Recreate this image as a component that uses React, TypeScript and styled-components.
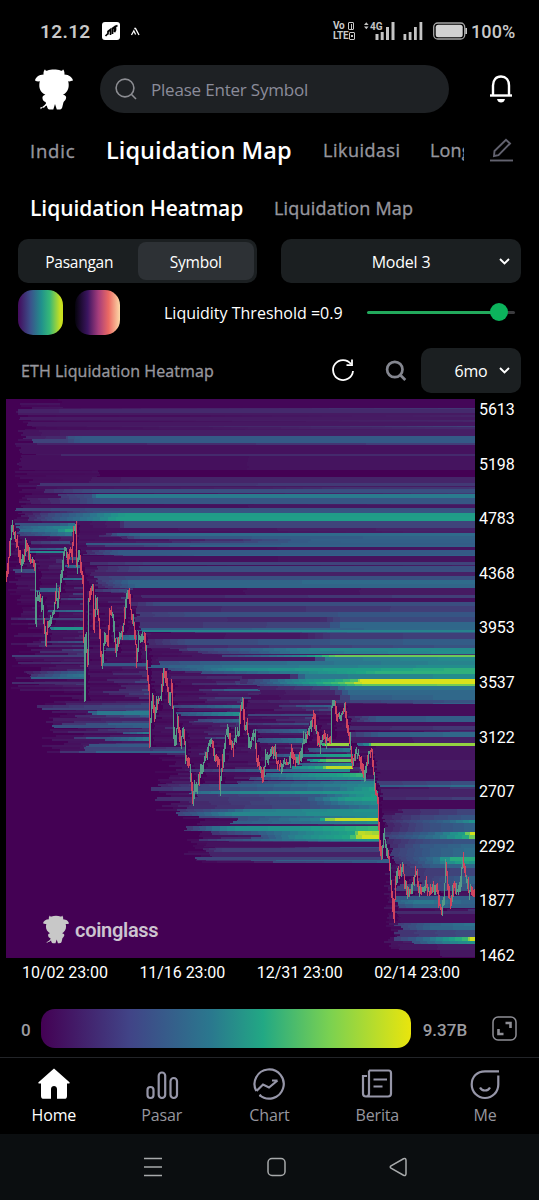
import React from "react";
import styled, { createGlobalStyle, css } from "styled-components";

const GlobalStyle = createGlobalStyle`
  html, body { margin: 0; padding: 0; background: #000; }
  * { box-sizing: border-box; }
`;

const sans = `"Open Sans", "Noto Sans", sans-serif`;
const din = `Roboto, "Liberation Sans", sans-serif`;

/* ---------- heatmap data ---------- */

const VIRIDIS = [
  [68, 1, 84], [70, 32, 102], [64, 66, 122], [52, 90, 134], [44, 118, 142], [34, 144, 140],
  [31, 163, 134], [62, 188, 113], [122, 205, 81], [184, 218, 42], [226, 228, 24],
];

function heat(v: number): string {
  const t = Math.max(0, Math.min(0.999, v)) * 10;
  const i = Math.floor(t);
  const f = t - i;
  const c = VIRIDIS[i].map((a, k) => Math.round(a + (VIRIDIS[i + 1][k] - a) * f));
  return `rgb(${c.join(",")})`;
}

function seeded(seed: number) {
  let s = seed;
  return () => {
    s = (s * 1664525 + 1013904223) % 4294967296;
    return s / 4294967296;
  };
}

const LEFT = 6;
const RIGHT = 475;
const TOP = 399;
const BOTTOM = 958;

const PRICE: number[][] = [
  [6, 582], [8, 565], [10, 550], [12, 526], [14, 534], [17, 542], [20, 555], [22, 565], [24, 558], [26, 541],
  [28, 547], [31, 563], [34, 560], [35, 568], [36, 622], [37, 597], [40, 596], [43, 608], [46, 644], [48, 625],
  [51, 620], [54, 612], [56, 592], [58, 606], [60, 590], [62, 570], [64, 553], [66, 549], [68, 562], [70, 550],
  [72, 556], [74, 530], [76, 525], [77, 565], [79, 552], [81, 567], [83, 578], [84, 640], [85, 700], [86, 640],
  [88, 662], [89, 600], [91, 594], [93, 586], [94, 630], [96, 598], [99, 620], [101, 655], [102, 664], [105, 635],
  [108, 642], [110, 612], [113, 615], [116, 652], [118, 640], [121, 635], [124, 625], [126, 600], [128, 590],
  [131, 610], [134, 622], [136, 645], [137, 662], [139, 640], [142, 637], [145, 635], [147, 665], [149, 690],
  [150, 745], [151, 720], [153, 695], [155, 718], [158, 700], [161, 698], [164, 670], [167, 685], [170, 702],
  [172, 683], [174, 730], [175, 742], [178, 722], [181, 740], [184, 730], [186, 758], [190, 765], [192, 790],
  [193, 803], [195, 785], [197, 788], [201, 772], [205, 760], [209, 745], [212, 742], [215, 757], [219, 762],
  [220, 789], [222, 770], [226, 735], [228, 727], [230, 740], [233, 748], [236, 737], [239, 735], [241, 710],
  [243, 698], [245, 730], [247, 722], [249, 748], [253, 735], [255, 733], [257, 760], [260, 768], [263, 782],
  [266, 758], [270, 756], [274, 748], [277, 762], [281, 766], [285, 763], [290, 762], [292, 750], [296, 763],
  [300, 758], [303, 744], [307, 735], [310, 728], [314, 714], [316, 728], [320, 746], [324, 735], [328, 740],
  [331, 740], [332, 706], [335, 702], [337, 716], [340, 718], [343, 712], [345, 705], [348, 728], [350, 742],
  [353, 765], [356, 752], [360, 757], [364, 778], [367, 765], [369, 752], [372, 752], [374, 775], [376, 792],
  [378, 800], [380, 845], [382, 858], [384, 835], [386, 845], [389, 858], [391, 880], [393, 908], [394, 919],
  [396, 880], [398, 872], [401, 876], [403, 866], [405, 882], [408, 896], [411, 893], [414, 878], [417, 873],
  [419, 892], [422, 890], [426, 886], [430, 893], [434, 888], [438, 892], [440, 905], [442, 911], [444, 900],
  [446, 866], [448, 885], [451, 906], [454, 885], [457, 890], [460, 886], [463, 858], [466, 876], [469, 892],
  [472, 890], [475, 896],
];

function priceAt(x: number): number {
  for (let i = 1; i < PRICE.length; i++) {
    if (x <= PRICE[i][0]) {
      const [x0, y0] = PRICE[i - 1];
      const [x1, y1] = PRICE[i];
      return y0 + ((y1 - y0) * (x - x0)) / (x1 - x0);
    }
  }
  return PRICE[PRICE.length - 1][1];
}

/* y, height, then x/value pairs; the value is interpolated between pairs */
const BANDS: number[][] = [
  [399, 9, 60, 0.02, 475, 0.02],
  [409, 4, 16, 0.1, 100, 0.13, 475, 0.13], [413, 2, 16, 0.08, 475, 0.08], [417, 3, 22, 0.08, 475, 0.09],
  [422, 4, 27, 0.08, 475, 0.07], [430, 6, 20, 0.05, 60, 0.09, 475, 0.1],
  [436, 3, 24, 0.1, 66, 0.14, 68, 0.26, 82, 0.3, 475, 0.3], [439, 4, 33, 0.2, 68, 0.22, 80, 0.3, 475, 0.3],
  [443, 2, 36, 0.1, 475, 0.2], [445, 9, 20, 0.05, 475, 0.06], [454, 2, 64, 0.13, 475, 0.13],
  [456, 14, 20, 0.04, 475, 0.07], [470, 7, 100, 0, 475, 0], [477, 6, 90, 0.07, 150, 0.11, 475, 0.12],
  [483, 3, 40, 0.15, 475, 0.18], [489, 4, 44, 0.13, 92, 0.24, 475, 0.26],
  [494, 4, 60, 0.17, 92, 0.25, 96, 0.42, 475, 0.42], [498, 6, 30, 0.08, 80, 0.2, 100, 0.28, 475, 0.29],
  [505, 3, 20, 0.04, 475, 0.08], [508, 3, 17, 0.2, 120, 0.26, 475, 0.28], [511, 3, 20, 0.05, 60, 0.13, 100, 0.27, 475, 0.28],
  [513, 4, 24, 0.07, 55, 0.25, 90, 0.38, 125, 0.56, 475, 0.57], [517, 4, 30, 0.12, 60, 0.3, 100, 0.44, 116, 0.57, 475, 0.58],
  [521, 7, 78, 0.04, 120, 0.1, 124, 0.2, 475, 0.22], [528, 3, 78, 0.04, 475, 0.12],
  [533, 3, 105, 0.1, 117, 0.3, 140, 0.35, 475, 0.37], [536, 3, 120, 0.1, 140, 0.28, 475, 0.34],
  [543, 2, 87, 0.28, 475, 0.32], [547, 3, 80, 0.04, 475, 0.07], [550, 5, 85, 0.12, 118, 0.3, 475, 0.3],
  [556, 6, 80, 0.04, 475, 0.07], [562, 3, 88, 0.14, 160, 0.22, 475, 0.2], [566, 6, 95, 0.12, 150, 0.24, 475, 0.26],
  [572, 4, 90, 0.1, 475, 0.1], [576, 4, 95, 0.18, 140, 0.25, 475, 0.27], [580, 4, 96, 0.15, 128, 0.33, 475, 0.37],
  [584, 4, 96, 0.1, 135, 0.33, 475, 0.35], [588, 7, 130, 0.03, 475, 0.09], [595, 3, 140, 0.12, 475, 0.2],
  [598, 4, 130, 0.04, 475, 0.06], [602, 4, 133, 0.12, 160, 0.25, 475, 0.25], [606, 6, 135, 0.12, 475, 0.2],
  [612, 5, 137, 0.17, 200, 0.25, 475, 0.29], [617, 5, 135, 0.15, 320, 0.12, 340, 0.22, 475, 0.24],
  [622, 6, 140, 0.15, 330, 0.22, 340, 0.34, 475, 0.35], [628, 3, 140, 0.3, 475, 0.36], [630, 2, 144, 0.44, 475, 0.46],
  [633, 6, 148, 0.04, 300, 0.08, 330, 0.17, 475, 0.2], [639, 6, 148, 0.12, 185, 0.23, 475, 0.32],
  [645, 3, 148, 0.1, 475, 0.28], [648, 3, 190, 0.2, 240, 0.3, 320, 0.45, 475, 0.49], [651, 3, 200, 0.15, 300, 0.4, 475, 0.5],
  [655, 2, 220, 0.2, 300, 0.45, 322, 0.65, 335, 0.77, 475, 0.79], [657, 4, 155, 0.06, 315, 0.08, 325, 0.4, 475, 0.49],
  [661, 4, 160, 0.25, 240, 0.35, 475, 0.46], [665, 3, 150, 0.3, 240, 0.4, 475, 0.5],
  [668, 3, 170, 0.25, 240, 0.48, 350, 0.58, 475, 0.66], [671, 3, 200, 0.25, 280, 0.4, 375, 0.64, 475, 0.66],
  [674, 5, 165, 0.05, 290, 0.08, 305, 0.4, 475, 0.5],
  [679, 3, 240, 0.12, 285, 0.4, 335, 0.6, 358, 0.75, 360, 0.98, 475, 0.98],
  [682, 2, 240, 0.12, 280, 0.38, 345, 0.76, 362, 0.98, 475, 0.98], [684, 2, 260, 0.2, 310, 0.42, 362, 0.75, 475, 0.8],
  [686, 4, 260, 0.1, 330, 0.2, 345, 0.4, 475, 0.4], [690, 5, 260, 0.06, 335, 0.13, 348, 0.34, 475, 0.36],
  [695, 5, 250, 0.03, 340, 0.1, 350, 0.3, 475, 0.36], [700, 3, 250, 0.08, 350, 0.2, 475, 0.28],
  [704, 12, 346, 0.04, 475, 0.04], [716, 6, 349, 0.1, 376, 0.28, 475, 0.32], [722, 4, 349, 0.04, 475, 0.06],
  [726, 4, 350, 0.12, 475, 0.18], [732, 5, 350, 0.15, 378, 0.3, 475, 0.36], [737, 6, 350, 0.07, 475, 0.12],
  [743, 3, 355, 0.3, 369, 0.5, 371, 0.84, 475, 0.84], [746, 14, 374, 0.06, 475, 0.07], [760, 10, 376, 0.09, 475, 0.09],
  [770, 11, 378, 0.06, 475, 0.07], [781, 4, 379, 0.18, 475, 0.26], [785, 2, 379, 0.3, 475, 0.38], [789, 8, 380, 0.1, 475, 0.12],
  [797, 3, 380, 0.12, 475, 0.2], [800, 9, 380, 0.02, 475, 0.03], [809, 6, 400, 0.12, 475, 0.22], [815, 5, 382, 0.1, 420, 0.2, 475, 0.3],
  [820, 3, 384, 0.12, 450, 0.35, 475, 0.52], [823, 9, 386, 0.1, 430, 0.25, 475, 0.33],
  [832, 3, 386, 0.15, 435, 0.35, 465, 0.6, 470, 0.95, 475, 0.98], [835, 4, 386, 0.2, 440, 0.4, 469, 0.65, 475, 0.9],
  [839, 5, 388, 0.12, 430, 0.25, 475, 0.28], [844, 4, 390, 0.12, 420, 0.28, 475, 0.36], [848, 9, 392, 0.18, 430, 0.3, 475, 0.38],
  [857, 4, 395, 0.15, 440, 0.4, 450, 0.62, 475, 0.64], [861, 3, 395, 0.12, 440, 0.4, 462, 0.6, 475, 0.5],
  [864, 4, 398, 0.1, 430, 0.3, 475, 0.36], [868, 8, 400, 0.15, 475, 0.22], [876, 8, 420, 0.15, 475, 0.35],
  [884, 7, 397, 0.18, 475, 0.28], [896, 4, 397, 0.28, 475, 0.32], [900, 4, 396, 0.32, 420, 0.42, 475, 0.32], [904, 4, 397, 0.25, 420, 0.35, 475, 0.3],
  [911, 3, 396, 0.12, 475, 0.14], [914, 9, 400, 0.04, 475, 0.06], [923, 3, 396, 0.18, 430, 0.32, 475, 0.4],
  [926, 4, 402, 0.2, 430, 0.33, 475, 0.37], [930, 7, 397, 0.15, 475, 0.25],
  [937, 4, 396, 0.18, 430, 0.38, 455, 0.6, 468, 0.7, 470, 0.96, 475, 0.96], [941, 3, 412, 0.25, 450, 0.45, 475, 0.52],
  [944, 6, 400, 0.06, 475, 0.1], [950, 7, 440, 0.07, 475, 0.07],
  // levels swept by the first decline
  [523, 3, 17, 0.26, 60, 0.3, 75, 0.4], [526, 3, 17, 0.3, 75, 0.5], [529, 3, 22, 0.35, 58, 0.42, 65, 0.6, 74, 0.65], [532, 4, 20, 0.2, 72, 0.42],
  [541, 3, 28, 0.15, 70, 0.25], [548, 2, 28, 0.25, 64, 0.35], [551, 2, 30, 0.35, 36, 0.46, 65, 0.48],
  [557, 3, 67, 0.2, 79, 0.3], [565, 3, 65, 0.3, 81, 0.38], [569, 4, 14, 0.2, 35, 0.25], [578, 2, 63, 0.35, 84, 0.38],
  [588, 4, 37, 0.3, 59, 0.35], [589, 3, 97, 0.15, 127, 0.25], [598, 2, 60, 0.15, 83, 0.25], [610, 2, 45, 0.3, 84, 0.38],
  [618, 2, 12, 0.1, 40, 0.2, 84, 0.2], [627, 3, 50, 0.35, 54, 0.5, 84, 0.52], [641, 2, 40, 0.15, 84, 0.27], [648, 3, 104, 0.2, 115, 0.25],
  [635, 5, 118, 0.3, 137, 0.4], [655, 2, 14, 0.18, 84, 0.2], [662, 2, 20, 0.1, 84, 0.15], [663, 3, 102, 0.3, 147, 0.3],
  [671, 3, 24, 0.08, 68, 0.28, 85, 0.32], [674, 3, 29, 0.15, 67, 0.35, 85, 0.4], [677, 2, 32, 0.32, 85, 0.36], [682, 2, 10, 0.13, 85, 0.15],
  [705, 3, 40, 0.12, 100, 0.2, 149, 0.24], [708, 2, 43, 0.18, 149, 0.2], [711, 4, 90, 0.25, 97, 0.4, 149, 0.43], [718, 3, 55, 0.08, 149, 0.12],
  [725, 3, 52, 0.25, 100, 0.26, 149, 0.32], [729, 2, 110, 0.15, 149, 0.18], [732, 2, 124, 0.25, 150, 0.44], [737, 4, 103, 0.25, 150, 0.42],
  [744, 3, 88, 0.26, 150, 0.3], [747, 4, 85, 0.2, 150, 0.22],
  [676, 3, 170, 0.1, 242, 0.14], [705, 3, 172, 0.2, 240, 0.4], [712, 4, 178, 0.25, 240, 0.5], [719, 3, 195, 0.2, 240, 0.35],
  [714, 2, 248, 0.2, 313, 0.25], [723, 2, 250, 0.15, 309, 0.25], [729, 4, 255, 0.2, 307, 0.35], [738, 5, 258, 0.25, 303, 0.4],
  [743, 3, 320, 0.5, 325, 0.84, 349, 0.86], [748, 4, 310, 0.25, 350, 0.4], [754, 3, 275, 0.25, 330, 0.55, 353, 0.6],
  [759, 3, 310, 0.4, 326, 0.75, 352, 0.78], [763, 3, 300, 0.3, 353, 0.5], [766, 3, 290, 0.45, 323, 0.65, 326, 0.9, 353, 0.92],
  [769, 3, 190, 0.15, 280, 0.35, 350, 0.5], [773, 4, 265, 0.35, 330, 0.55, 363, 0.68], [777, 3, 250, 0.2, 300, 0.4, 364, 0.5],
  [781, 3, 240, 0.2, 374, 0.45], [784, 3, 160, 0.1, 240, 0.3, 375, 0.48], [787, 4, 150, 0.15, 240, 0.25, 340, 0.38, 376, 0.6],
  [791, 3, 190, 0.35, 240, 0.45, 378, 0.55], [794, 3, 200, 0.15, 320, 0.3, 378, 0.6], [797, 4, 155, 0.12, 300, 0.22, 345, 0.55, 378, 0.6],
  [801, 4, 190, 0.12, 310, 0.25, 345, 0.42, 379, 0.5], [805, 4, 190, 0.12, 300, 0.22, 379, 0.42],
  [809, 3, 180, 0.15, 228, 0.3, 250, 0.42, 379, 0.52], [812, 4, 178, 0.2, 232, 0.45, 379, 0.5],
  [816, 2, 200, 0.2, 330, 0.4, 379, 0.5], [818, 5, 240, 0.25, 320, 0.45, 325, 0.75, 335, 0.93, 379, 0.94],
  [821, 3, 230, 0.3, 330, 0.4, 379, 0.5], [826, 5, 186, 0.15, 212, 0.35, 235, 0.48, 300, 0.52, 345, 0.62, 379, 0.68],
  [831, 4, 210, 0.15, 290, 0.4, 355, 0.6, 358, 0.92, 379, 0.85], [835, 4, 260, 0.25, 295, 0.45, 350, 0.62, 362, 0.96, 379, 0.96],
  [839, 2, 200, 0.15, 270, 0.35, 379, 0.55], [842, 5, 205, 0.05, 380, 0.06], [848, 4, 205, 0.1, 222, 0.2, 380, 0.18],
  [852, 5, 210, 0.1, 380, 0.12], [857, 3, 196, 0.2, 382, 0.22],
];

interface Cell { x: number; y: number; w: number; h: number; c: string }

function buildCells(): Cell[] {
  const rnd = seeded(71);
  const cells: Cell[] = [];
  const push = (x: number, y: number, x2: number, h: number, v: number) => {
    if (x2 > x) cells.push({ x, y, w: x2 - x, h, c: heat(v) });
  };
  // faint background levels, reset wherever the price sweeps through them
  for (let y = 403; y < 948; y += 2) {
    let start = 0;
    if (y < 520) start = 14 + rnd() * 24;
    else if (y < 600) start = 8 + rnd() * 14;
    else if (y < 690) start = 10 + rnd() * 34;
    else if (y < 752) start = 42 + rnd() * 42;
    else if (y < 810) start = 148 + rnd() * 34;
    else if (y < 862) start = 182 + rnd() * 24;
    else start = 383 + rnd() * 12;
    let x = Math.round(start);
    while (x < RIGHT) {
      let end = RIGHT;
      for (let p = x + 2; p < RIGHT; p++) {
        if ((priceAt(p) - y) * (priceAt(p - 1) - y) <= 0) { end = p; break; }
      }
      let v = 0.02 + rnd() * 0.05;
      const gain = y > 520 ? rnd() * 0.38 : rnd() * 0.05;
      let cur = x;
      while (cur < end) {
        const next = Math.min(end, cur + 8 + Math.round(rnd() * 30));
        push(cur, y, next, 2, v);
        v = Math.min(v + rnd() * gain * 0.35, 0.32);
        cur = next;
      }
      x = end + 2 + Math.round(rnd() * 4);
    }
  }
  for (const band of BANDS) {
    const [y, h, ...pts] = band;
    for (let row = 0; row < h; row += 2) {
      const rh = Math.min(2, h - row);
      const shift = Math.round((rnd() - 0.5) * 6);
      const last = pts[pts.length - 2];
      for (let i = 0; i + 3 < pts.length; i += 2) {
        const a = i === 0 ? pts[0] + shift : pts[i];
        const b = pts[i + 2];
        const va = pts[i + 1];
        const vb = pts[i + 3];
        const steps = Math.max(1, Math.min(Math.round((b - a) / 7), Math.ceil(Math.abs(vb - va) / 0.025)));
        for (let s = 0; s < steps; s++) {
          const x1 = Math.round(a + ((b - a) * s) / steps);
          const x2 = Math.round(a + ((b - a) * (s + 1)) / steps);
          push(Math.max(LEFT, x1), y + row, Math.min(last, x2), rh, va + ((vb - va) * (s + 0.5)) / steps);
        }
      }
    }
  }
  return cells;
}

interface Candle { x: number; top: number; h: number; up: boolean }

function buildCandles(): Candle[] {
  const rnd = seeded(9);
  const out: Candle[] = [];
  let prev = priceAt(6);
  for (let x = 6; x < RIGHT; x += 1) {
    const now = priceAt(x + 1);
    const up = rnd() < 0.25 ? now >= prev : now < prev;
    const pad = 2 + rnd() * 9;
    const share = rnd();
    const top = Math.min(prev, now) - pad * share;
    const bottom = Math.max(prev, now) + pad * (1 - share);
    out.push({ x, top, h: Math.max(3, bottom - top), up });
    prev = now;
  }
  return out;
}

const CELLS = buildCells();
const CANDLES = buildCandles();

/* ---------- layout ---------- */

const Screen = styled.main`
  width: 539px;
  height: 1200px;
  display: flex;
  flex-direction: column;
  overflow: hidden;
  background: #000;
  color: #fff;
  font-family: ${sans};
  white-space: nowrap;
`;

const StatusBar = styled.header`
  height: 62px;
  display: flex;
  align-items: center;
  padding: 0 23px 0 40px;
  font: 500 19px ${din};
  color: #c9c9c9;
`;

const Clock = styled.span`
  width: 62px;
  letter-spacing: 0.35px;
  font-weight: 600;
`;

const StatusIcons = styled.div`
  margin-left: auto;
  display: flex;
  align-items: center;
`;

const Lte = styled.div`
  width: 30px;
  display: flex;
  flex-direction: column;
  font: 700 10px/10px ${din};
  letter-spacing: -0.3px;
`;

const LteLine = styled.div<{ $gap: number }>`
  height: 10px;
  display: flex;
  align-items: center;
  gap: ${(p) => p.$gap}px;
`;

const SimSlot = styled.i<{ $filled?: boolean }>`
  width: 6px;
  height: 8px;
  border: 1.5px solid #c9c9c9;
  border-radius: 1px;
  background: linear-gradient(#c9c9c9, #c9c9c9) center / ${(p) => (p.$filled ? "2px 2px" : "1px 5px")} no-repeat;
`;

const SimBars = styled.svg`
  margin: 0 10px 0 8px;
`;

const Percent = styled.span`
  width: 45px;
  margin-left: 4px;
  font-size: 18px;
  letter-spacing: 0.1px;
`;

const SearchRow = styled.div`
  height: 54px;
  display: flex;
  align-items: center;
  padding: 0 25px 0 35px;
`;

const SearchField = styled.div`
  width: 349px;
  height: 48px;
  margin: 0 40px 0 27px;
  padding-left: 15px;
  border-radius: 24px;
  background: #1e2124;
  display: flex;
  align-items: center;
  gap: 14px;
  color: #8b8c9a;
  font-size: 17px;
  letter-spacing: -0.2px;
`;

const TabRow = styled.nav`
  height: 70px;
  display: flex;
  align-items: center;
  padding: 0 26px 2px 30px;
`;

const TabScroller = styled.div`
  width: 434px;
  height: 40px;
  overflow: hidden;
  display: flex;
  align-items: center;
`;

const Tab = styled.span<{ $active?: boolean; $width: number; $size: number; $track?: number }>`
  flex: none;
  width: ${(p) => p.$width}px;
  font-size: ${(p) => p.$size}px;
  font-weight: ${(p) => (p.$active ? 600 : 400)};
  letter-spacing: ${(p) => p.$track ?? 0}px;
  color: ${(p) => (p.$active ? "#fff" : "#96969e")};
  ${(p) => !p.$active && css`-webkit-text-stroke: 0.35px #96969e;`}
`;

const EditButton = styled.div`
  margin-left: 26px;
  display: flex;
`;

const SubTabRow = styled.nav`
  height: 53px;
  display: flex;
  align-items: center;
  padding: 0 0 9px 30px;
`;

const ControlRow = styled.div`
  height: 44px;
  display: flex;
  gap: 24px;
  padding: 0 18px;
`;

const Segmented = styled.div`
  width: 239px;
  padding: 3px;
  border-radius: 10px;
  background: #1b1f21;
  display: flex;
`;

const Segment = styled.div<{ $active?: boolean }>`
  flex: 1;
  border-radius: 8px;
  display: flex;
  align-items: center;
  justify-content: center;
  font-size: 15.5px;
  padding-top: 2px;
  letter-spacing: -0.25px;
  ${(p) => p.$active && css`background: #2d3135;`}
`;

const Select = styled.div`
  flex: 1;
  border-radius: 10px;
  background: #1b1f21;
  display: flex;
  align-items: center;
  justify-content: center;
  position: relative;
  font-size: 16px;
  letter-spacing: -0.2px;
  padding-top: 1px;

  svg { position: absolute; right: 11px; top: 18px; }
`;

const ThresholdRow = styled.div`
  height: 59px;
  display: flex;
  align-items: center;
  padding: 0 24px 1px 18px;
`;

const Swatch = styled.div<{ $fill: string }>`
  flex: none;
  width: 45px;
  height: 45px;
  margin-right: 12px;
  border-radius: 15px;
  background: linear-gradient(90deg, ${(p) => p.$fill});
`;

const ThresholdLabel = styled.span`
  flex: none;
  width: 235px;
  padding: 2px 0 0 32px;
  font-size: 16px;
`;

const Slider = styled.div`
  flex: none;
  width: 148px;
  height: 3px;
  border-radius: 2px;
  display: flex;
  align-items: center;
  background: linear-gradient(90deg, #22a95c 125px, #3b3b3e 125px);
`;

const Knob = styled.i`
  width: 18px;
  height: 18px;
  margin-left: 123px;
  border-radius: 50%;
  background: #0cb35c;
`;

const TitleRow = styled.div`
  height: 57px;
  display: flex;
  align-items: center;
  padding: 0 18px 0 21px;

  h1 {
    width: 310px;
    margin: 0;
    font-size: 16px;
    font-weight: 400;
    letter-spacing: 0.1px;
    color: #97979e;
    -webkit-text-stroke: 0.35px #97979e;
  }
`;

const RangeSelect = styled.div`
  width: 100px;
  height: 45px;
  margin-left: 13px;
  display: flex;
`;

const ChartRow = styled.section`
  height: 559px;
  display: flex;
  padding-left: 6px;
`;

const Plot = styled.div`
  width: 469px;
  height: 559px;
  position: relative;
`;

const Watermark = styled.div`
  position: absolute;
  left: 37px;
  bottom: 14px;
  display: flex;
  align-items: center;
  gap: 6px;
  color: #cdc4d0;
  font: 600 20px ${din};
  letter-spacing: -0.3px;
`;

const PriceAxis = styled.div`
  height: 566px;
  padding: 1px 0 0 4px;
  display: flex;
  flex-direction: column;
  justify-content: space-between;
  font: 400 16px/19px ${din};
  letter-spacing: -0.1px;
`;

const TimeAxis = styled.div`
  height: 51px;
  display: flex;
  padding: 5px 0 0 22px;
  font: 400 16px/20px ${din};
  letter-spacing: -0.05px;

  span { width: 117.4px; }
`;

const LegendRow = styled.div`
  height: 48px;
  display: flex;
  padding-left: 21px;
  color: #9c9ca0;
  font: 500 17px/42px ${din};
`;

const LegendBar = styled.div`
  width: 370px;
  height: 39px;
  margin: 0 12px 0 10px;
  border-radius: 14px;
  background: linear-gradient(90deg, #440154, #414487 24%, #2a788e 46%, #22a884 60%, #7ad151 78%, #e9e50d);
`;

const BottomNav = styled.nav`
  height: 77px;
  display: flex;
  border-top: 1px solid #222428;
`;

const NavItem = styled.div<{ $active?: boolean }>`
  flex: 1;
  display: flex;
  flex-direction: column;
  align-items: center;
  padding-top: 9px;
  gap: 3px;
  font-size: 16px;
  line-height: 22px;
  letter-spacing: -0.15px;
  color: ${(p) => (p.$active ? "#fff" : "#96969e")};
`;

const SystemBar = styled.footer`
  height: 66px;
  background: #0b0e10;
  display: flex;
  align-items: center;
  padding-left: 142px;
  gap: 101px;
`;

/* ---------- icons ---------- */

const Mascot = ({ width, height, color }: { width: number; height: number; color: string }) => (
  <svg width={width} height={height} viewBox="0 0 38 41" fill={color}>
    <path d="M10 0.2C10.4 1.6 11.5 2 12.5 1.5C16 0.2 22 0.2 25.5 1.5C26.500 2 27.600 1.600 28 0.200C29.400 1.800 29.700 4 29.400 5.400C34 5.600 37.700 8.400 38 11.600C36 12.400 34.500 12.500 33.200 12.300C34.400 17 33.600 21.500 30 24.400L28 25.800C30.800 26.200 31.700 28.200 30.900 29.800C30.400 31.600 29 32.400 28.400 33.400L27.200 38.500C26.700 40.300 25.300 40.500 24 40.500H21.800L20 35L18.300 40.500H14.500C13 40.500 12.300 39 11.800 36.500L10.300 37.200L9 38.800L7.400 38.600L5.800 40.200L5.200 38.600L7.200 38L9.500 36.300L11 34.500L10.600 33C8.800 32.500 7.800 31.500 7.500 29.600C7 27.500 8.500 26 10.400 25.800L8.200 24.400C4.300 21.500 3.700 17 4.800 12.300C3.200 12.600 1.200 12.300 0 11.500C0.600 8 4 5.600 8.600 5.400C8.300 4 8.600 1.800 10 0.200Z" />
  </svg>
);

const Chevron = () => (
  <svg width="11" height="9" viewBox="0 0 11 9" fill="none" stroke="#fff" strokeWidth="1.9">
    <path d="M1 2L5.500 6.500L10 2" />
  </svg>
);

const navProps = { width: 34, height: 34, viewBox: "0 0 34 34", fill: "none", stroke: "#9696a8", strokeWidth: 2.2 };

export default function App() {
  return (
    <>
      <GlobalStyle />
      <Screen>
        <StatusBar>
          <Clock>12.12</Clock>
          <svg width="40" height="20" viewBox="0 0 40 20">
            <rect x="0" y="1" width="18" height="18" rx="3" fill="#fff" />
            <path d="M3.500 15L6 12.500V10.500L8.500 8.500V14M6 13.500V10M10.500 13V7.500L12.500 6V11L13.500 9V5.500L15.500 4.500" stroke="#000" strokeWidth="1.7" fill="none" />
            <path d="M29.500 14L31.800 9.800L33.600 13.500M32.300 7.500L33.500 7.500L37 14" stroke="#fff" strokeWidth="1.3" fill="none" />
          </svg>
          <StatusIcons>
            <Lte>
              <LteLine $gap={4}>Vo<SimSlot /></LteLine>
              <LteLine $gap={0.5}>LTE<SimSlot $filled /></LteLine>
            </Lte>
            <svg width="32" height="20" viewBox="0 0 32 20" fill="#c4c4c4">
              <path d="M1 4L3.300 1.200L5.600 4ZM1 5.500H5.600L3.300 8.300Z" />
              <text x="7" y="8.500" fontSize="10" fontWeight="700" fontFamily="Roboto">4G</text>
              <path d="M12.500 13h3v6h-3zM17.700 11h3v8h-3zM23 6h3v13h-3zM28.500 1h3v18h-3z" />
            </svg>
            <SimBars width="20" height="20" viewBox="0 0 20 20" fill="#c4c4c4">
              <path d="M0.500 13h2.800v6h-2.800zM5.700 11h2.800v8h-2.800zM11 6h2.800v13h-2.800zM16.500 1h2.800v18h-2.800z" />
            </SimBars>
            <svg width="34" height="20" viewBox="0 0 34 20">
              <rect x="0.700" y="2" width="31" height="16" rx="4" fill="none" stroke="#a5a5a5" strokeWidth="1.3" />
              <rect x="2.700" y="3.800" width="27" height="12.400" rx="2.500" fill="#d2d2d2" />
              <path d="M32.300 7H34V13H32.300Z" fill="#c4c4c4" />
            </svg>
            <Percent>100%</Percent>
          </StatusIcons>
        </StatusBar>

        <SearchRow>
          <Mascot width={38} height={41} color="#fff" />
          <SearchField>
            <svg width="22" height="22" viewBox="0 0 22 22" fill="none" stroke="#8c8d92" strokeWidth="1.6">
              <circle cx="10" cy="10" r="8.900" />
              <path d="M16.300 16.300L21 21" />
            </svg>
            Please Enter Symbol
          </SearchField>
          <svg width="24" height="29" viewBox="0 0 24 29" fill="none" stroke="#fff" strokeWidth="2.4">
            <path d="M4 20V10.500C4 5 7 1.500 12 1.500S20 5 20 10.500V20" />
            <path d="M1 20.500H23" />
            <path d="M8 24H16C15.500 26.500 14 27.500 12 27.500S8.500 26.500 8 24Z" fill="#fff" stroke="none" />
          </svg>
        </SearchRow>

        <TabRow>
          <TabScroller>
            <Tab $width={76} $size={18.5} $track={0.8}>Indic</Tab>
            <Tab $active $width={217} $size={23.5} $track={0.05}>Liquidation Map</Tab>
            <Tab $width={107} $size={18} $track={0.5}>Likuidasi</Tab>
            <Tab $width={60} $size={18} $track={0.2}>Long</Tab>
          </TabScroller>
          <EditButton>
            <svg width="23" height="24" viewBox="0 0 23 24" fill="none" stroke="#62626f" strokeWidth="1.9">
              <path d="M4 18L4.500 13L16 1.800L20 5.500L8.500 17.200Z" />
              <path d="M0 22.500H23" />
            </svg>
          </EditButton>
        </TabRow>

        <SubTabRow>
          <Tab $active $width={244} $size={21} $track={-0.05}>Liquidation Heatmap</Tab>
          <Tab $width={150} $size={18} $track={0.2}>Liquidation Map</Tab>
        </SubTabRow>

        <ControlRow>
          <Segmented>
            <Segment>Pasangan</Segment>
            <Segment $active>Symbol</Segment>
          </Segmented>
          <Select>Model 3<Chevron /></Select>
        </ControlRow>

        <ThresholdRow>
          <Swatch $fill="#440a5c, #3b528b 28%, #21918c 52%, #35b779 70%, #c8e020 94%" />
          <Swatch $fill="#05030c, #3b1560 28%, #a53d7c 52%, #ec6a63 75%, #fcd9a8" />
          <ThresholdLabel>Liquidity Threshold =0.9</ThresholdLabel>
          <Slider><Knob /></Slider>
        </ThresholdRow>

        <TitleRow>
          <h1>ETH Liquidation Heatmap</h1>
          <svg width="24" height="24" viewBox="0 0 24 24" fill="none" stroke="#fff" strokeWidth="1.8">
            <path d="M20 5A10 10 0 1 0 22 12" />
            <path d="M21 0.500V6.200H15.500" />
          </svg>
          <svg width="53" height="24" viewBox="0 0 53 24" fill="none" stroke="#84868f" strokeWidth="2.7">
            <circle cx="39.800" cy="10.500" r="7.700" />
            <path d="M45.300 16L50.300 21" />
          </svg>
          <RangeSelect>
            <Select>6mo<Chevron /></Select>
          </RangeSelect>
        </TitleRow>

        <ChartRow>
          <Plot>
            <svg width="469" height="559" viewBox={`${LEFT} ${TOP} ${RIGHT - LEFT} ${BOTTOM - TOP}`} shapeRendering="crispEdges">
              <rect x={LEFT} y={TOP} width={RIGHT - LEFT} height={BOTTOM - TOP} fill="#440154" />
              {CELLS.map((c, i) => <rect key={i} x={c.x} y={c.y} width={c.w} height={c.h} fill={c.c} />)}
              {CANDLES.map((c) => (
                <rect key={c.x} x={c.x} y={c.top} width="1" height={c.h} fill={c.up ? "#559a88" : "#cf4560"} />
              ))}
            </svg>
            <Watermark>
              <Mascot width={26} height={29} color="#c8c8c8" />
              coinglass
            </Watermark>
          </Plot>
          <PriceAxis>
            {["5613", "5198", "4783", "4368", "3953", "3537", "3122", "2707", "2292", "1877", "1462"].map((p) => (
              <span key={p}>{p}</span>
            ))}
          </PriceAxis>
        </ChartRow>

        <TimeAxis>
          {["10/02 23:00", "11/16 23:00", "12/31 23:00", "02/14 23:00"].map((t) => <span key={t}>{t}</span>)}
        </TimeAxis>

        <LegendRow>
          0
          <LegendBar />
          9.37B
          <svg width="51" height="39" viewBox="0 0 51 39" fill="none" stroke="#8e8e95" strokeWidth="1.5">
            <rect x="26" y="8" width="23" height="23" rx="5" />
            <path d="M38.500 14H43.500V19M36.500 25H31.500V20" strokeWidth="2.6" />
          </svg>
        </LegendRow>

        <BottomNav>
          <NavItem $active>
            <svg {...navProps} fill="#fff" stroke="none">
              <path d="M17 1.500L32.500 15.200C33 16 32.500 16.500 31.500 16.500H30V29C30 31 29 31.800 27.500 31.800H20V22C20 18 14 18 14 22V31.800H7C5 31.800 4 31 4 29V16.500H2.500C1.500 16.500 1 16 1.500 15.200Z" />
            </svg>
            Home
          </NavItem>
          <NavItem>
            <svg {...navProps}>
              <rect x="2.500" y="20" width="6" height="11" rx="3" />
              <rect x="13.700" y="5.500" width="6.500" height="25.500" rx="3.200" />
              <rect x="25.500" y="11" width="6.500" height="20" rx="3.200" />
            </svg>
            Pasar
          </NavItem>
          <NavItem>
            <svg {...navProps}>
              <path d="M4.300 24A14.600 14.600 0 1 1 7.500 28" />
              <path d="M4.500 24L11 17.500L17 20.500L25.500 13.500M20 13.500H25.500M7.500 28L9 29" />
            </svg>
            Chart
          </NavItem>
          <NavItem>
            <svg {...navProps}>
              <path d="M9 3.500H28.500Q31 3.500 31 6V26.500Q31 29.500 28 29.500H6Q3 29.500 3 26.500V9H7M9 3.500V26.500Q9 29.500 6 29.500" />
              <path d="M13.500 12.500H27M13.500 19.500H22.500" />
            </svg>
            Berita
          </NavItem>
          <NavItem>
            <svg {...navProps}>
              <path d="M31 4.300H17C9 4.300 3.700 10 3.700 17.500S9.500 31 17 31S30.300 25 30.300 17.500V8.500" />
              <path d="M12 20.500C14 24.500 20 24.500 22 20.500" />
            </svg>
            Me
          </NavItem>
        </BottomNav>

        <SystemBar>
          <svg width="22" height="20" viewBox="0 0 22 20" stroke="#a8aaab" strokeWidth="1.6">
            <path d="M2 1.500H20M2 10H20M2 18.500H20" />
          </svg>
          <svg width="22" height="20" viewBox="0 0 22 20" fill="none" stroke="#a8aaab" strokeWidth="1.5">
            <rect x="3" y="1.500" width="17" height="17" rx="4" />
          </svg>
          <svg width="20" height="20" viewBox="0 0 20 20" fill="none" stroke="#a8aaab" strokeWidth="1.5">
            <path d="M15.500 1.800Q18 0.800 18 3.500V16.500Q18 19.200 15.500 18.200L3 11.200Q1.500 10 3 8.800Z" />
          </svg>
        </SystemBar>
      </Screen>
    </>
  );
}
